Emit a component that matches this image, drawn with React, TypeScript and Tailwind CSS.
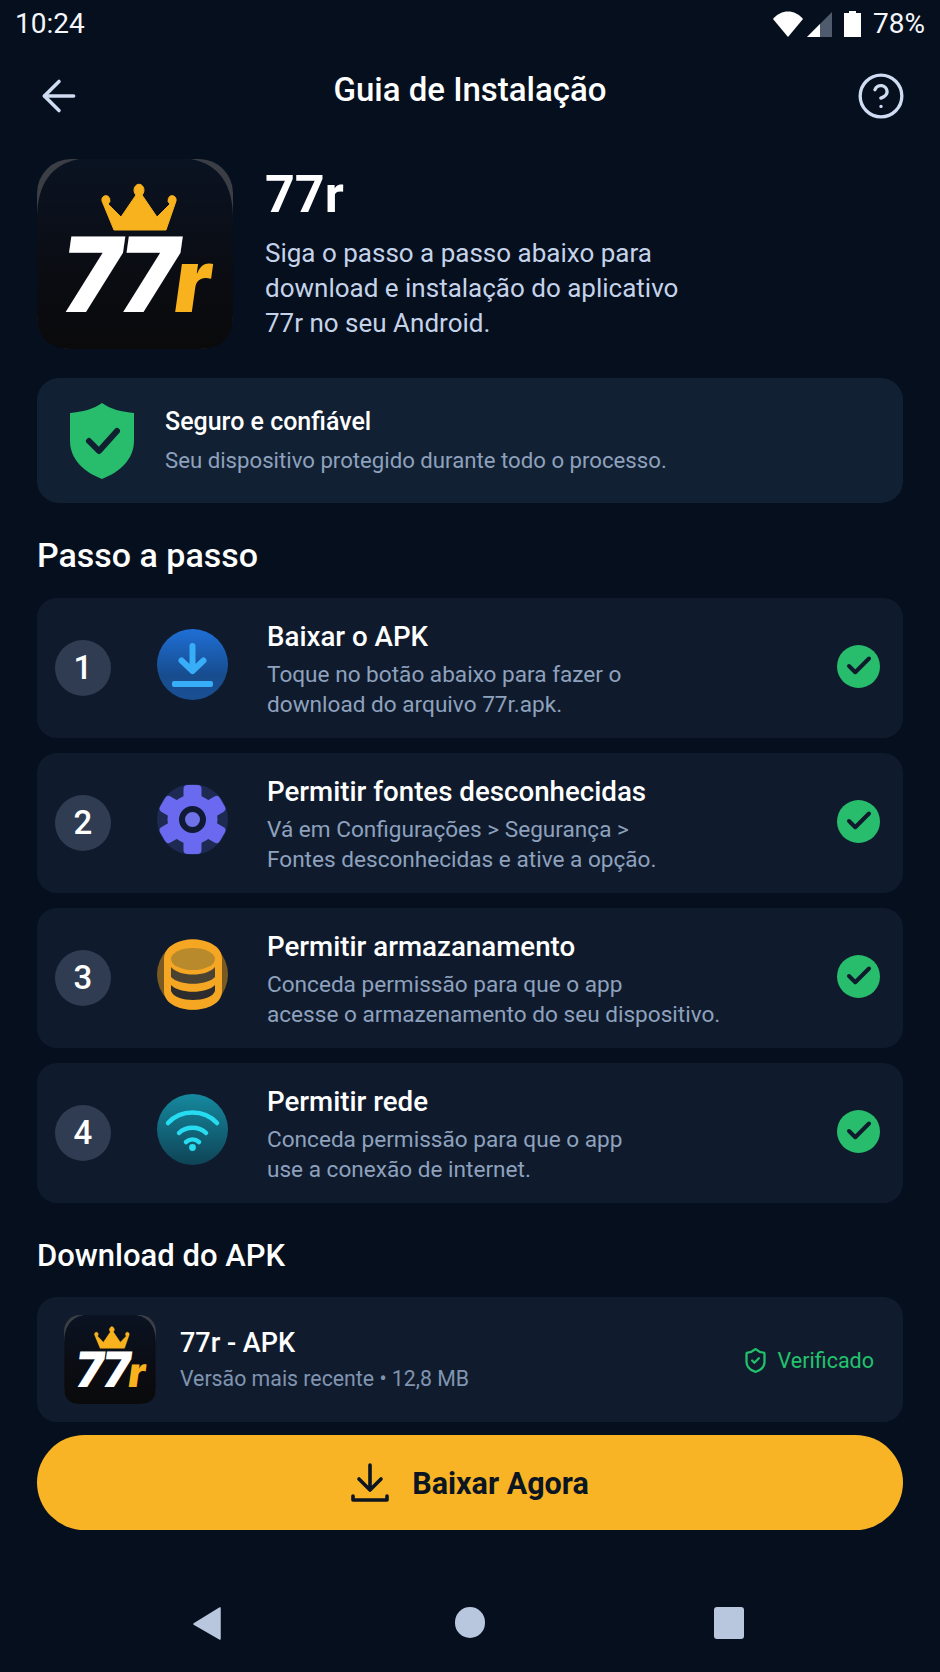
import React from 'react';
import { ArrowLeft, Check, CircleHelp, ShieldCheck } from 'lucide-react';

const steps = [
    { n: 1, title: 'Baixar o APK', lines: ['Toque no botão abaixo para fazer o', 'download do arquivo 77r.apk.'], icon: 'download' },
    { n: 2, title: 'Permitir fontes desconhecidas', lines: ['Vá em Configurações > Segurança >', 'Fontes desconhecidas e ative a opção.'], icon: 'gear' },
    { n: 3, title: 'Permitir armazanamento', lines: ['Conceda permissão para que o app', 'acesse o armazenamento do seu dispositivo.'], icon: 'db' },
    { n: 4, title: 'Permitir rede', lines: ['Conceda permissão para que o app', 'use a conexão de internet.'], icon: 'wifi' },
];

// App logo, scaled through the svg viewBox
const Logo = ({ className }: { className: string }) => (
    <svg viewBox="0 0 196 190" className={className}>
        <defs>
            <linearGradient id="logoBg" x1="0" y1="0" x2="0" y2="1">
                <stop offset="0" stopColor="#0a1322" />
                <stop offset="0.55" stopColor="#0b0d14" />
                <stop offset="1" stopColor="#0a0a0b" />
            </linearGradient>
        </defs>
        <rect width="196" height="190" rx="34" fill="#3b3f45" />
        <path d="M0 60 Q0 8 42 0 H154 Q196 8 196 60 V156 Q196 190 162 190 H34 Q0 190 0 156 Z" fill="url(#logoBg)" />
        <path d="M65 42 a4 4.5 0 1 1 6 3 L84 58 L99 36 a5 6 0 1 1 6 0 L120 58 L133 45 a4 4.5 0 1 1 6 -3 L129 71 H77 Z" fill="#f8b21e" stroke="#f8b21e" strokeLinejoin="round" />
        <g transform="translate(21 153) skewX(-8) scale(0.96 1)">
            <text x="0" y="0" fontFamily="Inter, sans-serif" fontWeight="900" fontSize="104" letterSpacing="-4" fill="#ffffff">
                77<tspan fill="#f8b21e" fontSize="88">r</tspan>
            </text>
        </g>
    </svg>
);

const StepIcon = ({ type }: { type: string }) => {
    if (type === 'download') {
        return (
            <svg viewBox="0 0 71 71" className="w-[71px] h-[71px]">
                <defs>
                    <linearGradient id="dlBg" x1="0" y1="0" x2="0" y2="1">
                        <stop offset="0" stopColor="#1f6fd6" />
                        <stop offset="0.65" stopColor="#174c8e" />
                        <stop offset="1" stopColor="#1a4f94" />
                    </linearGradient>
                </defs>
                <circle cx="35.5" cy="35.5" r="35.5" fill="url(#dlBg)" />
                <path d="M35.5 17 V42 M24.5 31.5 L35.5 42 L46.5 31.5" fill="none" stroke="#38aef8" strokeWidth="6" strokeLinecap="round" strokeLinejoin="round" />
                <rect x="15" y="52" width="41" height="6" rx="2" fill="#38aef8" />
            </svg>
        );
    }
    if (type === 'gear') {
        return (
            <svg viewBox="0 0 71 71" className="w-[71px] h-[71px]">
                <circle cx="35.5" cy="35.5" r="35.5" fill="#1e2a52" />
                <g fill="#6a6af0">
                    <circle cx="35.5" cy="35.5" r="25" />
                    {[0, 60, 120, 180, 240, 300].map(a => (
                        <rect key={a} x="26.5" y="1" width="18" height="16" rx="4" transform={`rotate(${a} 35.5 35.5)`} />
                    ))}
                </g>
                <circle cx="35.5" cy="35.5" r="10.5" fill="#6f72e8" stroke="#111a34" strokeWidth="6" />
            </svg>
        );
    }
    if (type === 'db') {
        return (
            <svg viewBox="0 0 71 71" className="w-[71px] h-[71px]">
                <circle cx="35.5" cy="35.5" r="35.5" fill="#7a5a20" />
                <path d="M7 20 C7 -6 65 -6 65 20 V52 C65 77 7 77 7 52 Z" fill="#f5a623" />
                <ellipse cx="36" cy="20" rx="22" ry="11" fill="#b98a2c" />
                <path d="M14 28 C22 38 50 38 58 28 V38 C50 47 22 47 14 38 Z" fill="#4a4334" />
                <path d="M14 46 C22 55 50 55 58 46 V52 C54 64 18 64 14 52 Z" fill="#2c2c2e" />
            </svg>
        );
    }
    return (
        <svg viewBox="0 0 71 71" className="w-[71px] h-[71px]">
            <defs>
                <linearGradient id="wifiBg" x1="0" y1="0" x2="0" y2="1">
                    <stop offset="0" stopColor="#15899f" />
                    <stop offset="1" stopColor="#0f4356" />
                </linearGradient>
            </defs>
            <circle cx="35.5" cy="35.5" r="35.5" fill="url(#wifiBg)" />
            <g fill="none" stroke="#27dcf0" strokeWidth="4.5" strokeLinecap="round">
                <path d="M11 29 C24 15 47 15 60 29" />
                <path d="M22 39 C29 32 42 32 49 39" />
                <path d="M29 48 C33 44.5 38 44.5 42 48" />
            </g>
            <circle cx="35.5" cy="53.5" r="3.4" fill="#27dcf0" />
        </svg>
    );
};

export default function App() {
    return (
        <div className="w-[940px] h-[1672px] overflow-hidden bg-[#050f1e] text-white flex flex-col font-['Roboto',sans-serif]">
            {/* status bar */}
            <div className="h-[48px] pl-[15px] pr-[15px] flex items-center justify-between text-[28px] text-[#f4f6fa]">
                <span>10:24</span>
                <div className="flex items-center">
                    <svg viewBox="0 0 30 26" className="w-[30px] h-[26px]"><path d="M0 8 C8 -2 22 -2 30 8 L15 26 Z" fill="#fff" /></svg>
                    <svg viewBox="0 0 25 25" className="w-[25px] h-[25px] ml-[4px]">
                        <path d="M25 0 V25 H0 Z" fill="#4f5b6c" />
                        <path d="M13 12 V25 H0 Z" fill="#fff" />
                    </svg>
                    <svg viewBox="0 0 17 26" className="w-[17px] h-[26px] ml-[12px]"><path d="M5 0 H12 V2 H17 V26 H0 V2 H5 Z" fill="#fff" /></svg>
                    <span className="ml-[12px]">78%</span>
                </div>
            </div>

            {/* header */}
            <div className="h-[96px] pl-[34px] pr-[34px] flex items-center justify-between">
                <ArrowLeft size={50} strokeWidth={1.7} className="text-[#cfdcf2]" />
                <h1 className="text-[33px] font-medium mb-[12px]">Guia de Instalação</h1>
                <CircleHelp size={50} strokeWidth={1.6} className="text-[#cfdcf2]" />
            </div>

            {/* hero */}
            <div className="mt-[15px] px-[37px] flex">
                <Logo className="w-[196px] h-[190px] shrink-0" />
                <div className="ml-[32px]">
                    <div className="text-[52px] leading-[60px] font-bold mt-[6px]">77r</div>
                    <p className="text-[26px] leading-[35px] text-[#c5d3ea] mt-[11px]">
                        Siga o passo a passo abaixo para<br />
                        download e instalação do aplicativo<br />
                        77r no seu Android.
                    </p>
                </div>
            </div>

            {/* safety card */}
            <div className="mt-[29px] mx-[37px] h-[125px] rounded-[22px] bg-[#122033] flex items-center pl-[33px]">
                <svg viewBox="0 0 64 76" className="w-[64px] h-[76px]">
                    <path d="M32 0 C40 6 52 9 64 10 V38 C64 56 50 69 32 76 C14 69 0 56 0 38 V10 C12 9 24 6 32 0 Z" fill="#27bd6c" />
                    <path d="M19 38 L29 48 L47 28" fill="none" stroke="#102030" strokeWidth="6" strokeLinecap="round" strokeLinejoin="round" />
                </svg>
                <div className="ml-[31px]">
                    <div className="text-[25px] leading-[34px] font-medium">Seguro e confiável</div>
                    <div className="text-[22.2px] leading-[32px] text-[#8ea1bd] mt-[5px]">Seu dispositivo protegido durante todo o processo.</div>
                </div>
            </div>

            <h2 className="mt-[31px] ml-[37px] text-[34px] leading-[42px] font-medium">Passo a passo</h2>

            {/* steps */}
            <div className="mt-[22px] mx-[37px] flex flex-col gap-[15px]">
                {steps.map(step => (
                    <div key={step.n} className="h-[140px] rounded-[20px] bg-[#0f1b2d] flex items-center pl-[18px] pr-[23px]">
                        <div className="w-[56px] h-[56px] rounded-full bg-[#2f3c52] flex items-center justify-center text-[33px] font-medium shrink-0">{step.n}</div>
                        <div className="ml-[46px] mb-[8px] shrink-0"><StepIcon type={step.icon} /></div>
                        <div className="ml-[39px] flex-1 mt-[3px]">
                            <div className="text-[27.7px] leading-[34px] font-medium">{step.title}</div>
                            <div className="text-[22.6px] leading-[30px] text-[#8ea1bd] mt-[6px]">
                                {step.lines[0]}<br />{step.lines[1]}
                            </div>
                        </div>
                        <div className="w-[43px] h-[43px] rounded-full bg-[#27bd6c] flex items-center justify-center shrink-0 mb-[4px]">
                            <Check size={30} strokeWidth={3.2} className="text-[#0f1b2d]" />
                        </div>
                    </div>
                ))}
            </div>

            <h2 className="mt-[33px] ml-[37px] text-[31px] leading-[40px] font-medium">Download do APK</h2>

            {/* download card */}
            <div className="mt-[21px] mx-[37px] h-[125px] rounded-[20px] bg-[#101c2e] flex items-center pl-[27px] pr-[29px]">
                <Logo className="w-[92px] h-[89px] shrink-0" />
                <div className="ml-[24px] flex-1">
                    <div className="text-[27px] leading-[34px] font-medium">77r - APK</div>
                    <div className="text-[21.3px] leading-[30px] text-[#8094b0] mt-[4px]">Versão mais recente • 12,8 MB</div>
                </div>
                <ShieldCheck size={27} strokeWidth={2} className="text-[#22c26c] mt-[2px]" />
                <span className="ml-[9px] text-[21.5px] text-[#22c26c] mt-[4px]">Verificado</span>
            </div>

            {/* main action */}
            <button className="mt-[13px] mx-[37px] h-[95px] rounded-full bg-[#f8b425] flex items-center justify-center text-[#0c1522] text-[30.5px] font-bold">
                <svg viewBox="0 0 38 40" className="w-[38px] h-[40px] mr-[23px]" fill="none" stroke="#0c1522" strokeWidth="3.6" strokeLinecap="round" strokeLinejoin="round">
                    <path d="M19 2 V26 M8 16 L19 27 L30 16" />
                    <path d="M2 33 V37 H36 V33" />
                </svg>
                <span className="mt-[2px]">Baixar Agora</span>
            </button>

            {/* nav bar */}
            <div className="mt-[77px] flex items-start pl-[193px]">
                <svg viewBox="0 0 28 33" className="w-[28px] h-[33px]"><path d="M27 1 V32 L1 17 Z" fill="#b8c6de" stroke="#b8c6de" strokeWidth="1.5" strokeLinejoin="round" /></svg>
                <div className="ml-[234px] w-[30px] h-[31px] rounded-full bg-[#b8c6de]" />
                <div className="ml-[229px] w-[30px] h-[32px] rounded-[3px] bg-[#b8c6de]" />
            </div>
        </div>
    );
}
